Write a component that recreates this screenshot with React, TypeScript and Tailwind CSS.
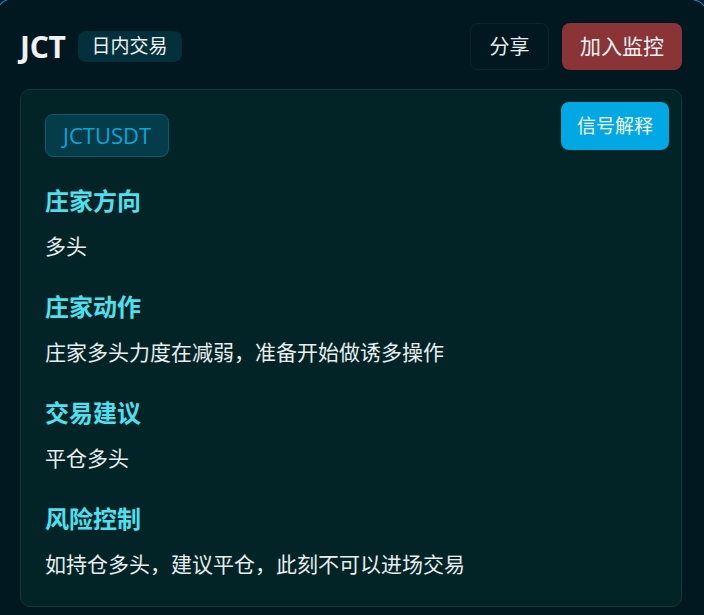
import React from "react";

const cjk = { fontFamily: '"Open Sans", "Noto Sans CJK SC", sans-serif' };

const sections = [
  { title: "庄家方向", body: "多头" },
  { title: "庄家动作", body: "庄家多头力度在减弱，准备开始做诱多操作" },
  { title: "交易建议", body: "平仓多头" },
  { title: "风险控制", body: "如持仓多头，建议平仓，此刻不可以进场交易" },
];

export default function App() {
  return (
    <div className="relative w-[704px] h-[615px] overflow-hidden bg-[#011820] pl-5 pr-[22px] pt-[23px]" style={cjk}>
      <svg className="absolute left-0 top-0" width="10" height="10" viewBox="0 0 10 10">
        <path d="M0 5 Q2 1.5 7 0" stroke="#0a8fc4" strokeWidth="1.2" fill="none" />
      </svg>
      <svg className="absolute right-0 top-0" width="12" height="12" viewBox="0 0 12 12">
        <path d="M2 0 Q9 1 12 6" stroke="#0a8fc4" strokeWidth="1.2" fill="none" />
      </svg>
      <div className="flex items-center justify-between h-[47px]">
        <div className="flex items-center gap-3">
          <span className="text-[30px] font-bold text-[#eef2f3] tracking-[-0.3px] leading-none">JCT</span>
          <span className="h-[31px] px-[14px] flex items-center rounded-lg bg-[#03303b] text-[19px] text-[#eef2f3]">日内交易</span>
        </div>
        <div className="flex items-center gap-[13px]">
          <button className="h-[47px] w-[79px] rounded-lg border border-[#0a2530] bg-[#011820] text-[20px] text-[#e8eef0]">分享</button>
          <button className="h-[47px] w-[120px] rounded-lg bg-[#8a3437] text-[21px] text-[#eef2f3]">加入监控</button>
        </div>
      </div>
      <div className="relative mt-[19px] rounded-[10px] border border-[#0c3a30] bg-[#022426] px-6 pt-6 pb-[25px]">
        <button className="absolute right-3 top-3 h-12 w-[108px] rounded-lg bg-[#02a8e3] text-[19px] text-[#f2f8fa]">信号解释</button>
        <div className="inline-flex h-[43px] items-center rounded-lg border border-[#0b5a70] bg-[#053c4a] px-[17px] text-[22px] text-[#0aa6d8]">JCTUSDT</div>
        <div className="mt-7 flex flex-col gap-7">
          {sections.map((s) => (
            <div key={s.title} className="flex flex-col gap-[14px]">
              <div className="h-8 flex items-center text-[24px] font-bold text-[#4ee0ef]">{s.title}</div>
              <div className="h-8 flex items-center text-[21px] text-[#e8eef0]">{s.body}</div>
            </div>
          ))}
        </div>
      </div>
    </div>
  );
}
